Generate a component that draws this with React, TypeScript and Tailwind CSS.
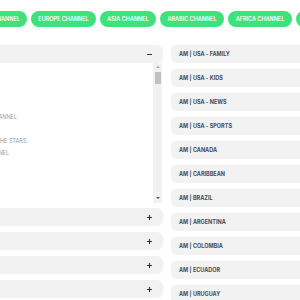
import { Plus, Minus } from 'lucide-react'

const channels = [
  { name: 'AMERICA CHANNEL', w: 'w-[68px]' },
  { name: 'EUROPE CHANNEL', w: 'w-[65px]' },
  { name: 'ASIA CHANNEL', w: 'w-[56px]' },
  { name: 'ARABIC CHANNEL', w: 'w-[64px]' },
  { name: 'AFRICA CHANNEL', w: 'w-[64px]' },
  { name: 'LATINO CHANNEL', w: 'w-[64px]' },
]

const groups = [
  'AM | USA - FAMILY',
  'AM | USA - KIDS',
  'AM | USA - NEWS',
  'AM | USA - SPORTS',
  'AM | CANADA',
  'AM | CARIBBEAN',
  'AM | BRAZIL',
  'AM | ARGENTINA',
  'AM | COLOMBIA',
  'AM | ECUADOR',
  'AM | URUGUAY',
]

export default function App() {
  return (
    <div className="w-[300px] h-[300px] overflow-hidden bg-white font-['Inter',sans-serif]">
      {/* Channel pills */}
      <div className="flex gap-1 pt-[11px] -ml-[41px] whitespace-nowrap">
        {channels.map(c => (
          <span key={c.name} className={`${c.w} shrink-0 h-4 rounded-full bg-[#3de27b] text-white text-[5.5px] font-semibold flex items-center justify-center`}>
            {c.name}
          </span>
        ))}
      </div>

      <div className="flex gap-2 mt-[18px]">
        {/* Accordion */}
        <div className="-ml-5 w-[183px] shrink-0">
          <div className="h-[18px] bg-[#f2f2f2] rounded-md flex items-center justify-end pr-[10px]">
            <Minus size={7} strokeWidth={4} className="text-[#333]" />
          </div>
          <div className="h-[140px] flex">
            <div className="flex-1 pt-12 text-[5.5px] leading-[12px] text-[#999] whitespace-nowrap">
              <div className="flex w-[37px] justify-end"><span className="shrink-0">THE BEST AMERICAN CHANNEL</span></div>
              <div className="h-3" />
              <div className="flex w-[48px] justify-end"><span className="shrink-0">WATCH ALL THE STARS.</span></div>
              <div className="flex w-[29px] justify-end"><span className="shrink-0">SPORTS CHANNEL</span></div>
            </div>
            <div className="w-[9px] mr-[1px] bg-[#f1f1f1] flex flex-col items-center">
              <span className="mt-[3px] w-0 h-0 border-x-[2px] border-x-transparent border-b-[2px] border-b-[#a3a3a3]" />
              <span className="mt-[4px] w-[6px] h-[12px] bg-[#c1c1c1]" />
              <span className="mt-auto mb-[4px] w-0 h-0 border-x-[2px] border-x-transparent border-t-[2px] border-t-[#505050]" />
            </div>
          </div>
          <div className="mt-[5px] flex flex-col gap-[6px]">
            {[0, 1, 2, 3].map(i => (
              <div key={i} className="h-[18px] bg-[#f2f2f2] rounded-md flex items-center justify-end pr-[10px]">
                <Plus size={7} strokeWidth={4} className="text-[#333]" />
              </div>
            ))}
          </div>
        </div>

        {/* Groups */}
        <div className="flex flex-col gap-[6px] w-[160px] shrink-0">
          {groups.map(g => (
            <div key={g} className="h-[18px] bg-[#f2f2f2] rounded-md flex items-center pl-2 text-[5.5px] font-bold text-[#474b5e] whitespace-nowrap">
              {g}
            </div>
          ))}
        </div>
      </div>
    </div>
  )
}
